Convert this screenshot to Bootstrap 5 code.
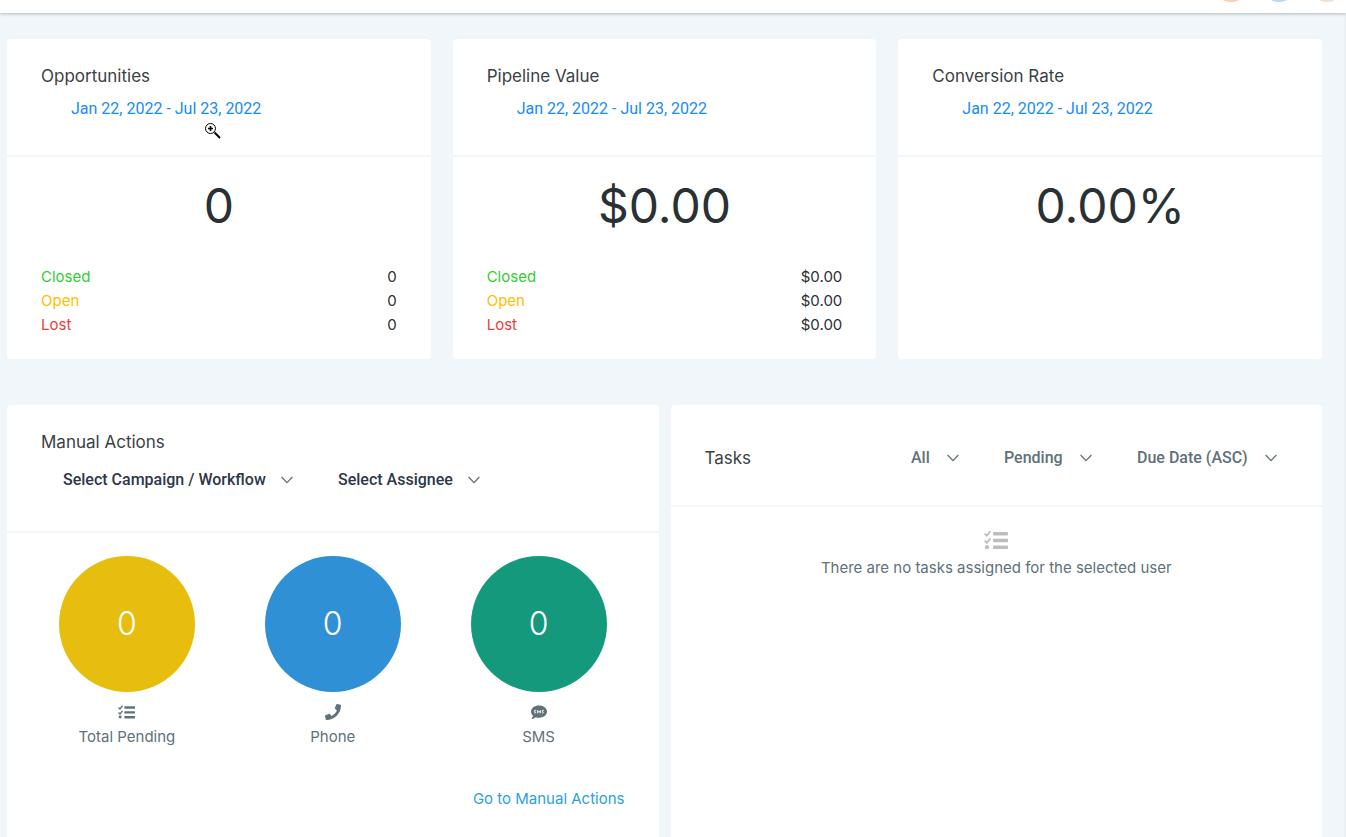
<!DOCTYPE html>
<html lang="en">
<head>
<meta charset="utf-8">
<meta name="viewport" content="width=device-width, initial-scale=1">
<title>Dashboard</title>
<link href="https://cdn.jsdelivr.net/npm/bootstrap@5.3.0/dist/css/bootstrap.min.css" rel="stylesheet">
<style>
  body { background: #f0f6f9; color: #2a3135; font-family: Inter, "Liberation Sans", sans-serif; font-size: 15px; line-height: 24px; }
  .topbar { height: 13px; padding: 0 1px 11px 0; background: #fff; box-shadow: 0 1px 3px rgba(0,0,0,.25); gap: 12px; }
  .avatar { width: 36px; height: 36px; background: #ffcdb0; }
  .avatar-blue { background: #b9d9fb; }
  .avatar-sand { background: #f3dfcd; }
  .page { padding: 26px 23px 0 7px; border-right: 1px solid #e6ecef; }
  .stats-row { --bs-gutter-x: 22px; margin-bottom: 46px; }
  .panels-row { --bs-gutter-x: 12px; }
  .panel { background: #fff; border-radius: 4px; }
  .panels-row .panel { border-radius: 4px 4px 0 0; }
  .panel-head { border-bottom: 2px solid #f0f6f9; padding: 24px 34px; }
  .stat-head { height: 118px; }
  .stat-body { height: 202px; padding: 18px 34px 0; }
  .panel-title { font-size: 17px; line-height: 26px; font-weight: 400; color: #3a4145; margin: 0; }
  .dates { font-family: Roboto, sans-serif; font-size: 16px; line-height: 24px; color: #188bf6; margin: 8px 0 0 30px; }
  .figure-big { font-size: 48px; line-height: 62px; font-weight: 400; text-align: center; margin: 0 0 28px; }
  .totals { width: 100%; border-collapse: collapse; }
  .totals th { font-weight: 400; padding: 0; }
  .totals td { text-align: right; padding: 0; }
  .c-closed { color: #37ca37; } .c-open { color: #ffbc00; } .c-lost { color: #e93d3d; }
  .pick { appearance: none; border: 0; font-family: Roboto, sans-serif; font-size: 16px; line-height: 24px; font-weight: 500; color: #2a3135; padding: 0 40px 0 22px;
    background: url("data:image/svg+xml,%3Csvg xmlns='http://www.w3.org/2000/svg' viewBox='0 0 12 8' fill='none' stroke='%23607179' stroke-width='1.3'%3E%3Cpath d='M.6 1 6 6.6 11.4 1'/%3E%3C/svg%3E") no-repeat right 11px center / 12px 8px; }
  .pick-head { color: #2d3748; padding-right: 38px; }
  .muted { color: #607179; }
  .actions-head { height: 128px; }
  .action-picks { margin-top: 13px; }
  .tasks-head { height: 102px; padding: 30px 34px 24px; }
  .counts { padding: 23px 17px 0; }
  .disc { width: 136px; height: 136px; font-size: 32px; font-weight: 300; color: #fff; margin-bottom: 12px; }
  .disc-y { background: #e7bd0e; } .disc-b { background: #2f90d5; } .disc-g { background: #15997d; }
  .more { color: #2e9fdb; text-decoration: none; margin: 38px 34px 24px; }
  .count-label { margin-top: 5px; }
  .no-tasks { padding-top: 23px; }
  .no-tasks p { margin: 6px 0 0; }
  .pointer { position: absolute; left: 198px; top: 84px; }
</style>
</head>
<body>
<svg class="d-none" xmlns="http://www.w3.org/2000/svg">
  <symbol id="tasks" viewBox="0 0 24 20">
    <g fill="none" stroke="currentColor" stroke-width="1.8"><path d="M.7 3.600 2.800 5.700 6.400 1.200M.7 10.700l2.100 2.100 3.600-4.500"/></g>
    <circle cx="3" cy="17.2" r="2.1" fill="currentColor"/>
    <g fill="currentColor"><rect x="9" y="2" width="15" height="3.4" rx=".8"/><rect x="9" y="8.8" width="15" height="3.4" rx=".8"/><rect x="9" y="15.6" width="15" height="3.4" rx=".8"/></g>
  </symbol>
</svg>
<div class="d-flex flex-column min-vh-100">
  <header class="topbar d-flex justify-content-end align-items-end overflow-hidden flex-shrink-0 position-relative">
    <span class="avatar rounded-circle flex-shrink-0"></span>
    <span class="avatar avatar-blue rounded-circle flex-shrink-0"></span>
    <span class="avatar avatar-sand rounded-circle flex-shrink-0"></span>
  </header>
  <main class="page container-fluid flex-grow-1 d-flex flex-column">
    <div class="row stats-row">
      <div class="col-4">
        <section class="panel position-relative">
          <div class="panel-head stat-head"><h2 class="panel-title">Opportunities</h2><p class="dates">Jan 22, 2022 - Jul 23, 2022</p></div>
          <div class="stat-body">
            <p class="figure-big">0</p>
            <table class="totals">
              <tr><th scope="row" class="c-closed">Closed</th><td>0</td></tr>
              <tr><th scope="row" class="c-open">Open</th><td>0</td></tr>
              <tr><th scope="row" class="c-lost">Lost</th><td>0</td></tr>
            </table>
          </div>
          <svg class="pointer" width="16" height="16" viewBox="0 0 16 16" aria-hidden="true"><circle cx="5.500" cy="5.500" r="5" fill="#fff" stroke="#000"/><path d="M3 5.500h5M5.500 3v5" stroke="#000" stroke-width="1.600"/><path d="m9.500 9.500 5.500 5.500" stroke="#000" stroke-width="2"/></svg>
        </section>
      </div>
      <div class="col-4">
        <section class="panel">
          <div class="panel-head stat-head"><h2 class="panel-title">Pipeline Value</h2><p class="dates">Jan 22, 2022 - Jul 23, 2022</p></div>
          <div class="stat-body">
            <p class="figure-big">$0.00</p>
            <table class="totals">
              <tr><th scope="row" class="c-closed">Closed</th><td>$0.00</td></tr>
              <tr><th scope="row" class="c-open">Open</th><td>$0.00</td></tr>
              <tr><th scope="row" class="c-lost">Lost</th><td>$0.00</td></tr>
            </table>
          </div>
        </section>
      </div>
      <div class="col-4">
        <section class="panel">
          <div class="panel-head stat-head"><h2 class="panel-title">Conversion Rate</h2><p class="dates">Jan 22, 2022 - Jul 23, 2022</p></div>
          <div class="stat-body"><p class="figure-big">0.00%</p></div>
        </section>
      </div>
    </div>
    <div class="row panels-row flex-grow-1">
      <div class="col-6">
        <section class="panel h-100 d-flex flex-column">
          <div class="panel-head actions-head">
            <h2 class="panel-title">Manual Actions</h2>
            <div class="action-picks d-flex gap-2">
              <select class="pick pick-head me-1" aria-label="Campaign or workflow"><option>Select Campaign / Workflow</option></select>
              <select class="pick pick-head" aria-label="Assignee"><option>Select Assignee</option></select>
            </div>
          </div>
          <div class="counts row g-0 text-center muted">
            <div class="col-4 d-flex flex-column align-items-center">
              <div class="disc disc-y rounded-circle d-flex align-items-center justify-content-center">0</div>
              <svg width="17" height="16" viewBox="0 0 24 20" aria-hidden="true"><use href="#tasks"/></svg>
              <span class="count-label">Total Pending</span>
            </div>
            <div class="col-4 d-flex flex-column align-items-center">
              <div class="disc disc-b rounded-circle d-flex align-items-center justify-content-center">0</div>
              <svg width="16" height="16" viewBox="0 0 512 512" fill="currentColor" aria-hidden="true"><path d="M493.400 24.600l-104-24c-11.300-2.600-22.900 3.300-27.500 13.900l-48 112c-4.200 9.800-1.400 21.300 6.900 28l60.600 49.600c-36 76.700-98.900 140.500-177.200 177.200l-49.600-60.600c-6.800-8.300-18.200-11.100-28-6.900l-112 48C3.900 366.500-2 378.100.6 389.400l24 104C27.100 504.200 36.700 512 48 512c256.100 0 464-207.500 464-464 0-11.200-7.700-20.900-18.600-23.400z"/></svg>
              <span class="count-label">Phone</span>
            </div>
            <div class="col-4 d-flex flex-column align-items-center">
              <div class="disc disc-g rounded-circle d-flex align-items-center justify-content-center">0</div>
              <svg width="16" height="16" viewBox="0 0 16 16" aria-hidden="true"><path fill="currentColor" d="M8 1.500c4.500 0 8 2.700 8 6.100s-3.500 6.200-8 6.200c-1.200 0-2.400-.2-3.500-.6C3.400 14.200 2 15 .3 15c.7-.8 1.500-2 1.700-3.300C.7 10.600 0 9.200 0 7.600c0-3.400 3.500-6.100 8-6.100z"/><g fill="none" stroke="#fff" stroke-width=".9"><path d="M5.200 6.400H4c-.9 0-.9 1.200 0 1.300s.9 1.300 0 1.300H3.100M6.600 9.300V6.500L8 8.400l1.400-1.900v2.800M12.900 6.400h-1.200c-.9 0-.9 1.200 0 1.300s.9 1.300 0 1.300h-.9"/></g></svg>
              <span class="count-label">SMS</span>
            </div>
          </div>
          <a class="more align-self-end" href="#">Go to Manual Actions</a>
        </section>
      </div>
      <div class="col-6">
        <section class="panel h-100">
          <div class="panel-head tasks-head d-flex justify-content-between align-items-center">
            <h2 class="panel-title">Tasks</h2>
            <div class="d-flex gap-2">
              <select class="pick muted me-1" aria-label="Assignee filter"><option>All</option></select>
              <select class="pick muted me-1" aria-label="Status"><option>Pending</option></select>
              <select class="pick muted" aria-label="Sort order"><option>Due Date (ASC)</option></select>
            </div>
          </div>
          <div class="no-tasks text-center muted">
            <svg class="d-block mx-auto" width="24" height="20" color="#bdbdbd" aria-hidden="true"><use href="#tasks"/></svg>
            <p>There are no tasks assigned for the selected user</p>
          </div>
        </section>
      </div>
    </div>
  </main>
</div>
<script src="https://cdn.jsdelivr.net/npm/bootstrap@5.3.0/dist/js/bootstrap.bundle.min.js"></script>
</body>
</html>
